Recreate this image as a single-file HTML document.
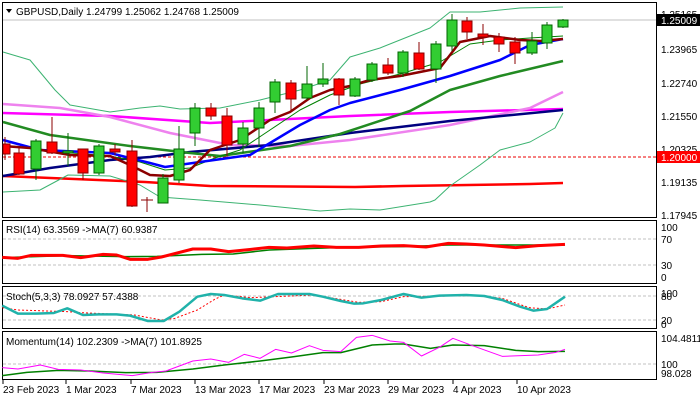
<!DOCTYPE html>
<html><head><meta charset="utf-8"><style>
body{margin:0;background:#fff;width:700px;height:400px;overflow:hidden}
svg{display:block;font-family:"Liberation Sans",sans-serif}
text{font-size:10px;fill:#000}
</style></head><body>
<svg width="700" height="400" viewBox="0 0 700 400">
<rect width="700" height="400" fill="#fff"/>
<rect x="2.5" y="2.5" width="654" height="215" fill="none" stroke="#000"/>
<rect x="2.5" y="220.5" width="654" height="63" fill="none" stroke="#000"/>
<rect x="2.5" y="286.5" width="654" height="42" fill="none" stroke="#000"/>
<rect x="2.5" y="331.5" width="654" height="48" fill="none" stroke="#000"/>
<line x1="3" y1="20" x2="656" y2="20" stroke="#c0c0c0"/>
<line x1="3" y1="157" x2="656" y2="157" stroke="#e00" stroke-dasharray="3,2"/>
<g fill="none" stroke-linejoin="round">
<polyline stroke="#f00" stroke-width="2.5" points="3,176 145,182 210,186 355,187 403,186 530,184 563,183"/>
<polyline stroke="#f0f" stroke-width="2.5" points="3,113 110,116 210,123 350,116 450,112 563,109"/>
<polyline stroke="#ee82ee" stroke-width="2.5" points="3,104 60,108 110,117 170,133 230,145 290,146 350,140 450,125 530,108 563,92"/>
<polyline stroke="#000080" stroke-width="2.5" points="3,176 50,168 110,160 150,157 190,152 270,145 350,133 450,121 563,110"/>
<polyline stroke="#228b22" stroke-width="2.5" points="3,122 50,135 130,146 190,153 220,156 290,146 340,134 410,111 450,90 500,76 563,61"/>
<polyline stroke="#3cb371" stroke-width="1" points="3,52 30,60 55,90 70,105 110,112 140,108 160,106 180,109 220,108 260,100 300,90 330,80 350,57 380,48 430,28 450,12 480,12 520,8 563,7"/>
<polyline stroke="#3cb371" stroke-width="1" points="3,192 40,190 68,175 110,176 140,185 160,197 200,200 260,205 320,211 350,209 380,210 430,202 435,200 450,186 480,165 500,150 530,142 555,128 563,113"/>
<polyline stroke="#008000" stroke-width="1" points="3,145 60,152 110,156 140,162 165,170 190,168 215,158 240,150 270,130 300,110 330,95 360,84 400,74 440,62 470,44 500,40 530,38 563,36"/>
<polyline stroke="#00f" stroke-width="2.5" points="3,140 40,150 110,153 150,163 165,167 200,162 250,155 270,143 300,125 330,110 350,103 400,90 450,76 500,60 530,45 563,39"/>
<polyline stroke="#8b0000" stroke-width="2.5" points="3,146 30,148 70,155 110,156 130,165 150,175 170,176 190,170 210,150 240,140 270,120 290,112 310,98 330,90 350,86 370,80 400,76 440,68 460,42 490,36 520,40 540,41 563,39"/>
</g>
<g stroke-width="1">
<g stroke="#8b0000" fill="#f00">
<line x1="5" y1="137" x2="5" y2="160"/><rect x="3" y="144" width="7" height="10"/>
<line x1="19" y1="147" x2="19" y2="175"/><rect x="14" y="153" width="10" height="21"/>
<line x1="52" y1="117" x2="52" y2="154"/><rect x="47" y="142" width="10" height="11"/>
<line x1="83" y1="149" x2="83" y2="180"/><rect x="78" y="149" width="10" height="24"/>
<line x1="115" y1="144" x2="115" y2="155"/><rect x="110" y="149" width="10" height="3"/>
<line x1="132" y1="140" x2="132" y2="207"/><rect x="127" y="151" width="10" height="55"/>
<line x1="147" y1="197" x2="147" y2="212"/><line x1="141" y1="200" x2="153" y2="200"/>
<line x1="211" y1="103" x2="211" y2="120"/><rect x="206" y="108" width="10" height="8"/>
<line x1="227" y1="108" x2="227" y2="157"/><rect x="222" y="116" width="10" height="29"/>
<line x1="291" y1="80" x2="291" y2="110"/><rect x="286" y="83" width="10" height="16"/>
<line x1="339" y1="78" x2="339" y2="105"/><rect x="334" y="79" width="10" height="16"/>
<line x1="388" y1="58" x2="388" y2="75"/><rect x="383" y="65" width="10" height="8"/>
<line x1="419" y1="42" x2="419" y2="70"/><rect x="414" y="53" width="10" height="16"/>
<line x1="467" y1="17" x2="467" y2="39"/><rect x="462" y="21" width="10" height="11"/>
<line x1="483" y1="24" x2="483" y2="45"/><rect x="478" y="34" width="10" height="3"/>
<line x1="499" y1="33" x2="499" y2="52"/><rect x="494" y="37" width="10" height="7"/>
<line x1="515" y1="37" x2="515" y2="64"/><rect x="510" y="42" width="10" height="11"/>
</g>
<g stroke="#006400" fill="#32cd32">
<line x1="36" y1="139" x2="36" y2="180"/><rect x="31" y="141" width="10" height="28"/>
<line x1="68" y1="133" x2="68" y2="166"/><rect x="63" y="151" width="10" height="2"/>
<line x1="99" y1="144" x2="99" y2="175"/><rect x="94" y="146" width="10" height="27"/>
<line x1="163" y1="174" x2="163" y2="203"/><rect x="158" y="178" width="10" height="25"/>
<line x1="179" y1="126" x2="179" y2="183"/><rect x="174" y="149" width="10" height="31"/>
<line x1="195" y1="103" x2="195" y2="146"/><rect x="190" y="108" width="10" height="25"/>
<line x1="243" y1="122" x2="243" y2="153"/><rect x="238" y="128" width="10" height="16"/>
<line x1="259" y1="102" x2="259" y2="147"/><rect x="254" y="108" width="10" height="20"/>
<line x1="275" y1="79" x2="275" y2="113"/><rect x="270" y="82" width="10" height="20"/>
<line x1="307" y1="66" x2="307" y2="100"/><rect x="302" y="84" width="10" height="14"/>
<line x1="323" y1="63" x2="323" y2="87"/><rect x="318" y="79" width="10" height="5"/>
<line x1="355" y1="77" x2="355" y2="97"/><rect x="350" y="79" width="10" height="17"/>
<line x1="372" y1="62" x2="372" y2="82"/><rect x="367" y="64" width="10" height="16"/>
<line x1="403" y1="50" x2="403" y2="77"/><rect x="398" y="52" width="10" height="21"/>
<line x1="436" y1="41" x2="436" y2="83"/><rect x="431" y="44" width="10" height="25"/>
<line x1="452" y1="14" x2="452" y2="51"/><rect x="447" y="20" width="10" height="26"/>
<line x1="532" y1="32" x2="532" y2="55"/><rect x="527" y="41" width="10" height="12"/>
<line x1="547" y1="22" x2="547" y2="49"/><rect x="542" y="25" width="10" height="18"/>
<line x1="563" y1="19" x2="563" y2="28"/><rect x="558" y="20" width="10" height="7"/>
</g>
</g>
<polygon points="6,9 12,9 9,13" fill="#000"/>
<text x="16" y="15">GBPUSD,Daily  1.24799 1.25062 1.24768 1.25009</text>
<g>
<text x="661" y="18">1.25165</text>
<rect x="657" y="14" width="43" height="12" fill="#000"/><text x="661" y="24" style="fill:#fff">1.25009</text>
<text x="661" y="53">1.23965</text>
<text x="661" y="87">1.22740</text>
<text x="661" y="120">1.21550</text>
<text x="661" y="153">1.20325</text>
<rect x="657" y="151" width="43" height="12" fill="#f00"/><text x="661" y="161" style="fill:#fff">1.20000</text>
<text x="661" y="186">1.19135</text>
<text x="661" y="219">1.17945</text>
</g>
<!-- RSI -->
<line x1="3" y1="239" x2="656" y2="239" stroke="#c0c0c0" stroke-dasharray="3,2"/>
<line x1="3" y1="265" x2="656" y2="265" stroke="#c0c0c0" stroke-dasharray="3,2"/>
<text x="6" y="233">RSI(14) 63.3569  -&gt;MA(7) 60.9387</text>
<text x="661" y="231">100</text><text x="661" y="243">70</text><text x="661" y="269">30</text><text x="661" y="281">0</text>
<g transform="translate(0,215) scale(0.4484,0.33333)" fill="none" stroke-linejoin="round">
<polyline vector-effect="non-scaling-stroke" stroke="#008000" stroke-width="1.5" points="5,128 150,122 280,125 350,124 450,118 520,117 600,105 700,100 800,96 900,95 1000,90 1100,90 1260,90"/>
<polyline vector-effect="non-scaling-stroke" stroke="#f00" stroke-width="3" points="5,127 40,130 70,121 140,121 180,128 230,118 260,120 290,133 330,133 360,126 430,102 470,102 510,110 560,103 600,97 640,99 700,93 750,97 800,97 850,93 900,92 950,96 1000,85 1040,87 1080,90 1150,98 1200,92 1260,88"/>
</g>
<!-- Stoch -->
<line x1="3" y1="296" x2="656" y2="296" stroke="#c0c0c0" stroke-dasharray="3,2"/>
<line x1="3" y1="320" x2="656" y2="320" stroke="#c0c0c0" stroke-dasharray="3,2"/>
<text x="6" y="300">Stoch(5,3,3) 78.0927 57.4388</text>
<text x="661" y="297">100</text><text x="661" y="300">80</text><text x="661" y="324">20</text><text x="661" y="328">0</text>
<g transform="translate(0,215) scale(0.4484,0.33333)" fill="none" stroke-linejoin="round">
<polyline vector-effect="non-scaling-stroke" stroke="#f00" stroke-width="1" stroke-dasharray="2,2" points="5,278 40,285 150,290 180,293 300,300 360,315 390,310 440,285 480,252 500,240 560,248 700,240 800,262 850,260 900,245 950,244 1060,242 1120,250 1180,278 1220,282 1260,270"/>
<polyline vector-effect="non-scaling-stroke" stroke="#20b2aa" stroke-width="2.5" points="5,272 40,296 80,296 120,294 150,280 185,300 220,298 260,298 290,302 330,318 365,318 400,290 440,245 470,237 500,240 540,250 580,257 620,237 690,237 720,245 760,258 790,266 810,265 850,255 900,237 940,248 980,242 1040,240 1080,243 1120,255 1160,275 1190,287 1220,282 1260,245"/>
</g>
<!-- Momentum -->
<line x1="3" y1="364" x2="656" y2="364" stroke="#c0c0c0" stroke-dasharray="3,2"/>
<text x="6" y="345">Momentum(14) 102.2309  -&gt;MA(7) 101.8925</text>
<text x="661" y="342">104.4811</text><text x="661" y="368">100</text><text x="661" y="377">98.028</text>
<g transform="translate(0,215) scale(0.4484,0.33333)" fill="none" stroke-linejoin="round">
<polyline vector-effect="non-scaling-stroke" stroke="#008000" stroke-width="1.5" points="5,482 60,472 130,466 200,468 280,473 350,472 430,462 500,450 580,438 650,426 720,413 760,413 830,390 880,387 900,387 960,400 1010,390 1080,392 1150,406 1200,410 1260,409"/>
<polyline vector-effect="non-scaling-stroke" stroke="#f0f" stroke-width="1" points="5,458 40,462 90,450 130,463 180,465 230,474 295,482 340,472 370,468 430,438 470,432 510,442 545,418 580,430 615,403 650,414 690,392 720,406 760,410 795,367 830,361 870,378 900,382 940,423 980,397 1010,370 1060,395 1120,424 1200,420 1240,412 1260,403"/>
</g>
<g stroke="#000">
<line x1="3" y1="380" x2="3" y2="384"/><line x1="66" y1="380" x2="66" y2="384"/><line x1="131" y1="380" x2="131" y2="384"/><line x1="195" y1="380" x2="195" y2="384"/><line x1="259" y1="380" x2="259" y2="384"/><line x1="324" y1="380" x2="324" y2="384"/><line x1="388" y1="380" x2="388" y2="384"/><line x1="453" y1="380" x2="453" y2="384"/><line x1="517" y1="380" x2="517" y2="384"/>
</g>
<text x="3" y="393">23 Feb 2023</text>
<text x="66" y="393">1 Mar 2023</text>
<text x="131" y="393">7 Mar 2023</text>
<text x="195" y="393">13 Mar 2023</text>
<text x="259" y="393">17 Mar 2023</text>
<text x="324" y="393">23 Mar 2023</text>
<text x="388" y="393">29 Mar 2023</text>
<text x="453" y="393">4 Apr 2023</text>
<text x="517" y="393">10 Apr 2023</text>
</svg>
</body></html>
